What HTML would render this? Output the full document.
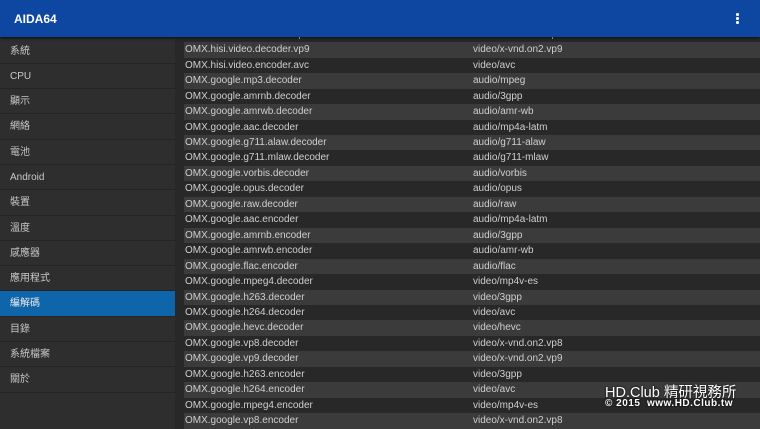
<!DOCTYPE html>
<html><head><meta charset="utf-8"><style>
*{margin:0;padding:0;box-sizing:border-box}
body{width:760px;height:428px;overflow:hidden;background:#282828;font-family:"Liberation Sans","Noto Sans CJK TC",sans-serif;position:relative}
#hdr{position:absolute;left:0;top:0;width:760px;height:37px;background:#0d47a1;z-index:5;box-shadow:0 1px 3px rgba(0,0,0,.6)}
#hdr .t{position:absolute;left:14px;top:12px;color:#fff;font-size:12px;font-weight:bold}
#hdr .m{position:absolute;left:736px;top:13px;width:3px}
#hdr .m i{display:block;width:2.5px;height:2.5px;background:#fff;border-radius:50%;margin-bottom:1.5px}
#side{position:absolute;left:0;top:38.5px;width:175px;height:390px;background:#2e2e2e}
.si{height:25.3px;line-height:25px;padding-left:10px;color:#c8c8c8;font-size:10px;border-bottom:1px solid #242424}
.si.sel{background:#0e65aa;color:#e8e8e8}
#tbl{position:absolute;left:184px;top:26.8px;width:576px}
.r{height:15.46px;line-height:16px;font-size:10px;color:#cfcfcf;position:relative}
.r.s{background:#3b3b3b}
.r span{position:absolute;left:1px}
.r b{font-weight:normal;position:absolute;left:289px}
#wm{position:absolute;left:605px;top:381px;color:#fff;font-size:14.5px;z-index:6;text-shadow:0 0 2px #000}
#wm2{position:absolute;left:605px;top:398px;color:#fff;font-size:10px;font-weight:bold;z-index:6;letter-spacing:.5px;text-shadow:0 0 2px #000}
</style></head><body>
<div id="hdr"><div class="t">AIDA64</div><div class="m"><i></i><i></i><i></i></div></div>
<div id="side">
<div class="si">系統</div><div class="si">CPU</div><div class="si">顯示</div><div class="si">網絡</div><div class="si">電池</div><div class="si">Android</div><div class="si">裝置</div><div class="si">溫度</div><div class="si">感應器</div><div class="si">應用程式</div><div class="si sel">編解碼</div><div class="si">目錄</div><div class="si">系統檔案</div><div class="si">關於</div>
</div>
<div id="tbl">
<div class="r"><span>OMX.hisi.video.decoder.vp8</span><b>video/x-vnd.on2.vp8</b></div>
<div class="r s"><span>OMX.hisi.video.decoder.vp9</span><b>video/x-vnd.on2.vp9</b></div>
<div class="r"><span>OMX.hisi.video.encoder.avc</span><b>video/avc</b></div>
<div class="r s"><span>OMX.google.mp3.decoder</span><b>audio/mpeg</b></div>
<div class="r"><span>OMX.google.amrnb.decoder</span><b>audio/3gpp</b></div>
<div class="r s"><span>OMX.google.amrwb.decoder</span><b>audio/amr-wb</b></div>
<div class="r"><span>OMX.google.aac.decoder</span><b>audio/mp4a-latm</b></div>
<div class="r s"><span>OMX.google.g711.alaw.decoder</span><b>audio/g711-alaw</b></div>
<div class="r"><span>OMX.google.g711.mlaw.decoder</span><b>audio/g711-mlaw</b></div>
<div class="r s"><span>OMX.google.vorbis.decoder</span><b>audio/vorbis</b></div>
<div class="r"><span>OMX.google.opus.decoder</span><b>audio/opus</b></div>
<div class="r s"><span>OMX.google.raw.decoder</span><b>audio/raw</b></div>
<div class="r"><span>OMX.google.aac.encoder</span><b>audio/mp4a-latm</b></div>
<div class="r s"><span>OMX.google.amrnb.encoder</span><b>audio/3gpp</b></div>
<div class="r"><span>OMX.google.amrwb.encoder</span><b>audio/amr-wb</b></div>
<div class="r s"><span>OMX.google.flac.encoder</span><b>audio/flac</b></div>
<div class="r"><span>OMX.google.mpeg4.decoder</span><b>video/mp4v-es</b></div>
<div class="r s"><span>OMX.google.h263.decoder</span><b>video/3gpp</b></div>
<div class="r"><span>OMX.google.h264.decoder</span><b>video/avc</b></div>
<div class="r s"><span>OMX.google.hevc.decoder</span><b>video/hevc</b></div>
<div class="r"><span>OMX.google.vp8.decoder</span><b>video/x-vnd.on2.vp8</b></div>
<div class="r s"><span>OMX.google.vp9.decoder</span><b>video/x-vnd.on2.vp9</b></div>
<div class="r"><span>OMX.google.h263.encoder</span><b>video/3gpp</b></div>
<div class="r s"><span>OMX.google.h264.encoder</span><b>video/avc</b></div>
<div class="r"><span>OMX.google.mpeg4.encoder</span><b>video/mp4v-es</b></div>
<div class="r s"><span>OMX.google.vp8.encoder</span><b>video/x-vnd.on2.vp8</b></div>
</div>
<div id="wm">HD.Club 精研視務所</div>
<div id="wm2">© 2015&nbsp; www.HD.Club.tw</div>
</body></html>
